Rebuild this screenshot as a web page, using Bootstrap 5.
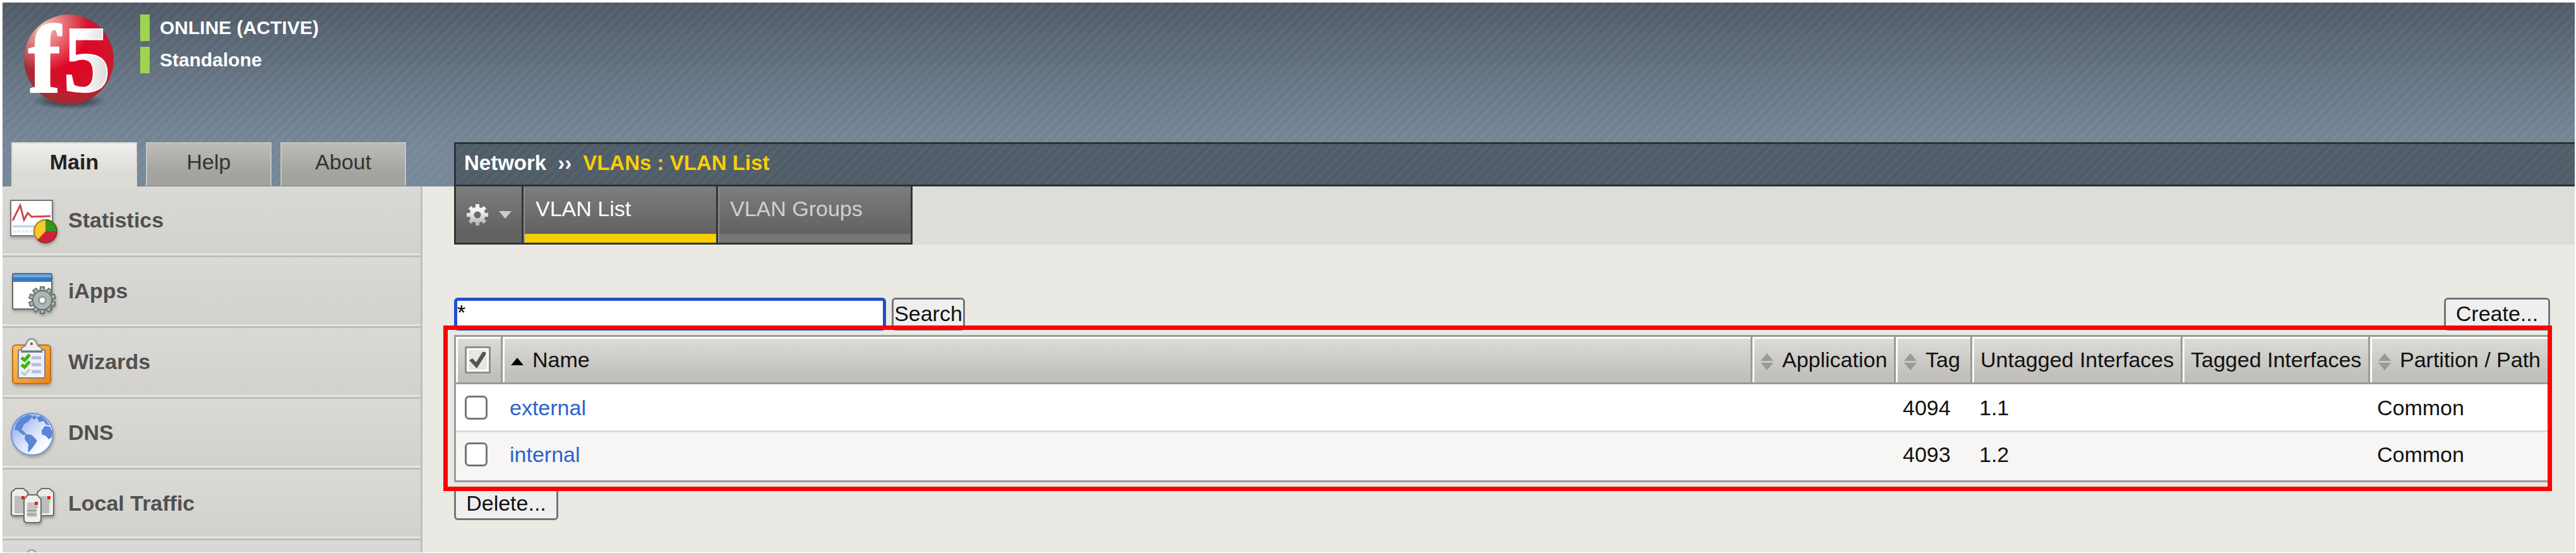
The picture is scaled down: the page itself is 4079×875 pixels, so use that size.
<!DOCTYPE html>
<html lang="en">
<head>
<meta charset="utf-8">
<meta name="viewport" content="width=device-width, initial-scale=1">
<title>VLAN List</title>
<link rel="stylesheet" href="https://cdn.jsdelivr.net/npm/bootstrap@5.3.0/dist/css/bootstrap.min.css">
<style>
  body { font-family: "Liberation Sans", Arial, sans-serif; font-size: 34px; line-height: 40px; color: #111; background: #fff; }
  .page { padding: 4px 2px 1px 4px; }
  .banner { background: repeating-linear-gradient(135deg, rgba(255,255,255,.04) 0 4px, transparent 5px 10px, rgba(255,255,255,.04) 11px), linear-gradient(#4f5a66, #6a7989 50%, #758798 80%); }
  .banner-top { height: 221px; padding-left: 24px; gap: 34px; }
  .status { font-size: 30px; line-height: 42px; font-weight: 700; color: #fff; gap: 9px; padding-top: 19px; }
  .status div { border-left: 15px solid #9fd44f; padding-left: 16px; }
  .side-tabs { width: 715px; gap: 14px; padding-left: 14px; height: 70px; flex: none; }
  .side-tabs button { width: 199px; border: 2px solid #c4c4c0; border-bottom: 2px solid #8f908c; background: linear-gradient(#bcbbb8, #a3a49f 70%); color: #333; padding: 0 0 8px; border-radius: 0; }
  .side-tabs button.active { font-weight: 700; color: #222; background: linear-gradient(#f0efed, #dcdbd6 70%); border-color: #d8d7d4 #d8d7d4 #dcdbd6; }
  .crumbs { height: 70px; border: 3px solid #2f3133; border-right: 0; padding: 0 0 4px 13px; font-size: 33px; font-weight: 700; color: #fff; background: repeating-linear-gradient(135deg, rgba(255,255,255,.03) 0 4px, transparent 5px 10px, rgba(255,255,255,.03) 11px), #505c68; }
  .crumbs a { color: #fff; text-decoration: none; }
  .crumbs .sep { padding: 0 18px; }
  .crumbs .here { color: #f8cf00; }
  .body-row { min-height: 0; }
  .side { width: 665px; flex: none; overflow: hidden; border-right: 3px solid #bebebd; }
  .side a { display: flex; align-items: center; height: 112px; gap: 10px; padding-left: 10px; border-top: 3px solid #bdbcba; border-bottom: 3px solid #e6e5e1; background: linear-gradient(#dad9d5, #d2d1cc); color: #505050; font-weight: 700; text-decoration: none; }
  .side a:first-child { height: 109px; border-top: 0; }
  .side svg { width: 84px; height: 84px; flex: none; filter: drop-shadow(1px 3px 2px rgba(0,0,0,.25)); }
  .content-pane { background: #eae9e4; padding-left: 50px; }
  .view-tabs { height: 92px; }
  .view-tabs > * { border: 0; border-right: 3px solid #333; border-bottom: 3px solid #333; background: linear-gradient(#7e7e7e, #626262 80%); box-shadow: inset 2px 0 #909090; color: #d0d0d0; padding: 0; }
  .view-tabs .gearbtn { width: 110px; border-left: 3px solid #333; box-shadow: none; }
  .view-tabs .vtab { width: 308px; text-align: left; padding: 3px 0 0 19px; text-decoration: none; border-radius: 0; }
  .view-tabs .vtab span { display: block; height: 72px; padding-top: 12px; }
  .view-tabs .vtab::after { content: ""; display: block; height: 14px; background: #767676; margin-left: -17px; }
  .view-tabs .vtab.active { color: #fff; }
  .view-tabs .vtab.active::after { background: #f6cf05; }
  .view-tabs .tab-fill { background: #deddd8; border: 0; box-shadow: none; }
  .tools { padding: 84px 39px 7px 0; gap: 9px; }
  .tools input { width: 684px; height: 52px; border: 5px solid #1d50cf; border-radius: 6px; padding: 0 0 6px; background: #fff; color: #000; outline: 0; }
  .sysbtn { height: 52px; border: 3px solid #767676; border-radius: 6px; background: #efefef; color: #111; padding: 0 0 3px; line-height: 40px; }
  .w-find { width: 116px; } .w-make { width: 168px; } .w-del { width: 165px; }
  .grid-wrap { margin-right: 39px; position: relative; }
  .callout { position: absolute; inset: -15px -3px -14px -17px; border: 7px solid #f00; pointer-events: none; }
  .vlans { width: 100%; table-layout: fixed; border: 3px solid #9a9a9a; border-collapse: separate; border-spacing: 0; }
  .vlans th { height: 75px; font-weight: 400; border-left: 3px solid #9a9a9a; border-bottom: 3px solid #9a9a9a; background: linear-gradient(#dddcd8, #c1c0bb 85%); box-shadow: inset 3px 3px #fff; padding: 0 0 0 13px; white-space: nowrap; }
  .vlans th:first-child { border-left: 0; }
  .vlans th:first-child, .vlans td:first-child { padding-left: 14px; }
  .vlans td { height: 76px; background: #fff; padding: 0 0 0 14px; border-bottom: 3px solid #dcdcdc; }
  .vlans tr:last-child td { padding-bottom: 4px; background: #f7f6f4; border-bottom-color: #f7f6f4; }
  .vlans a { color: #2a62cc; text-decoration: none; }
  .vlans input { appearance: none; display: block; width: 36px; height: 38px; margin: 0; border: 3px solid #767676; border-radius: 7px; background: #fff; }
  .vlans th input { width: 41px; height: 43px; border: 3px solid #8e8e8c; border-radius: 2px; background: #e6e6e3 url("data:image/svg+xml,%3Csvg xmlns='http://www.w3.org/2000/svg' viewBox='0 0 35 37'%3E%3Cpath d='M4 19l5-3 6 6L25 6h5L30 10 16 32z' fill='%23555'/%3E%3C/svg%3E") center / 100%; box-shadow: inset 0 0 0 3px #fff; }
  .srt { width: 20px; height: 27px; margin-right: 14px; }
  .delrow { padding-top: 8px; }
</style>
</head>
<body>
<div class="page d-flex flex-column vh-100 overflow-hidden">
  <header class="banner">
    <div class="banner-top d-flex align-items-start">
      <svg width="160" height="188" viewBox="28 4 160 188" role="img" aria-label="f5">
        <defs>
          <radialGradient id="ball" cx=".55" cy=".45" r=".62"><stop offset="0" stop-color="#e2001f"/><stop offset=".6" stop-color="#d5122b"/><stop offset="1" stop-color="#8c3838"/></radialGradient>
          <radialGradient id="shine" cx=".22" cy=".14" r=".5"><stop offset="0" stop-color="#f7c4b8"/><stop offset="1" stop-color="#f7c4b8" stop-opacity="0"/></radialGradient>
          <radialGradient id="shade"><stop offset="0" stop-color="#111" stop-opacity=".8"/><stop offset="1" stop-color="#111" stop-opacity="0"/></radialGradient>
          <linearGradient id="five" x1="0" y1="0" x2="1" y2="0"><stop offset=".4" stop-color="#fff"/><stop offset="1" stop-color="#d5d5d5"/></linearGradient>
        </defs>
        <ellipse cx="110" cy="160" rx="60" ry="13" fill="url(#shade)"/>
        <circle cx="109" cy="94" r="71" fill="url(#ball)"/>
        <circle cx="109" cy="94" r="71" fill="url(#shine)"/>
        <text x="45" y="145" font-family="Liberation Serif, serif" font-weight="700" font-size="152" fill="#fff" stroke="#fff" stroke-width="3">f</text>
        <text x="100" y="145" font-family="Liberation Serif, serif" font-weight="700" font-size="150" fill="url(#five)" stroke="#fff" stroke-width="2">5</text>
      </svg>
      <div class="status d-flex flex-column"><div>ONLINE (ACTIVE)</div><div>Standalone</div></div>
    </div>
    <div class="d-flex">
      <div class="side-tabs d-flex">
        <button type="button" class="active">Main</button><button type="button">Help</button><button type="button">About</button>
      </div>
      <nav class="crumbs flex-grow-1 d-flex align-items-center" aria-label="breadcrumb"><a href="#">Network</a><span class="sep">››</span><span class="here">VLANs : VLAN List</span></nav>
    </div>
  </header>
  <div class="body-row d-flex flex-grow-1">
    <nav class="side">
      <a href="#"><svg viewBox="0 0 84 84">
        <rect x="3" y="11" width="66" height="56" fill="#fff" stroke="#777" stroke-width="2"/>
        <path d="M6 50h58v4H6z" fill="#c3d8ea"/><path d="M6 60h50" stroke="#e4ecf4" stroke-width="4" stroke-dasharray="5 2"/>
        <path d="M6 43L18 19l6 23 6-11 6 6 30-1" fill="none" stroke="#cc4a52" stroke-width="3"/>
        <circle cx="58" cy="60" r="19" fill="#d3203a"/><path d="M58 60V41a19 19 0 0 1 19 19z" fill="#2e9a1b"/><path d="M58 60V41a19 19 0 0 0-13 33z" fill="#f7c92c"/>
        <circle cx="58" cy="60" r="18" fill="none" stroke="#5a3a20" stroke-opacity=".5" stroke-width="2"/></svg>Statistics</a>
      <a href="#"><svg viewBox="0 0 84 84">
        <rect x="6" y="15" width="62" height="56" rx="2" fill="#fff" stroke="#666" stroke-width="2"/><path d="M7 16h60v6H7z" fill="#5fa9ee"/><path d="M7 21h60v7H7z" fill="#3a78bb"/>
        <g transform="translate(53 57)"><g id="teeth" fill="#aab8b4" stroke="#66706e" stroke-width="2"><path id="tt" d="M-4-13l1-8h6l1 8v26l-1 8h-6l-1-8z"/><use href="#tt" transform="rotate(36)"/><use href="#tt" transform="rotate(72)"/><use href="#tt" transform="rotate(108)"/><use href="#tt" transform="rotate(144)"/><circle r="15"/></g><circle r="14" fill="#aab8b4"/><circle r="7" fill="#8e9b98"/><circle r="4" fill="#fff"/></g></svg>iApps</a>
      <a href="#"><svg viewBox="0 0 84 84">
        <defs><linearGradient id="board" x2="1" y2="1"><stop stop-color="#fbc566"/><stop offset="1" stop-color="#ef820d"/></linearGradient></defs>
        <rect x="6" y="16" width="60" height="61" rx="5" fill="url(#board)" stroke="#b9701d" stroke-width="2"/>
        <rect x="15" y="24" width="42" height="44" fill="#eef0ff" stroke="#80808c" stroke-width="2"/>
        <path d="M20 27v-6l6-4 3-7q7-8 14 0l3 7 6 4v6z" fill="#eee" stroke="#8b8b8b" stroke-width="2"/><path d="M20 26h32" stroke="#777" stroke-width="3"/><circle cx="36" cy="14" r="2" fill="#555"/>
        <path d="M20 36l5 4 8-9M20 47l5 4 8-9" fill="none" stroke="#3fb50f" stroke-width="5"/><path d="M20 59l5 4 8-9" fill="none" stroke="#ccc" stroke-width="4"/>
        <path d="M36 36h15M36 47h15M36 58h15" stroke="#b4bedb" stroke-width="5"/></svg>Wizards</a>
      <a href="#"><svg viewBox="0 0 84 84">
        <defs><linearGradient id="sea" x2="1" y2="1"><stop offset=".1" stop-color="#85a7ea"/><stop offset=".5" stop-color="#d6e2fa"/><stop offset=".8" stop-color="#fff"/><stop offset="1" stop-color="#a9c2f3"/></linearGradient></defs>
        <circle cx="37" cy="45" r="33" fill="url(#sea)" stroke="#6f93dc" stroke-width="2"/>
        <path d="M9 38l3-10 7-8 12-6 6 2-2 4-4 5-7 4-4 9 4 3 4 4-6 1-8-7zM26 45l10 1 9 9-5 8-6 8-4 3 1-13-6-8zM52 39l5-7 8 1 4 8-1 9-5 3-4-5-7-3zM44 18l7-2 8 7 6 8-6-1-4-6-7 2zM35 18l7-3 2 4-4 3z" fill="#5b86d6"/></svg>DNS</a>
      <a href="#"><svg viewBox="0 0 84 84">
        <g stroke="#6b6b6b" stroke-width="2" fill="#ececec"><path id="srv" d="M4 60V25l7-6h12l7 6v35l-2 2H6z"/><use href="#srv" x="41"/></g>
        <path d="M9 31h14v27H9zM50 31h14v27H50z" fill="#bdbdbd"/>
        <path d="M20 31h5v5h-5zM61 31h5v5h-5z" fill="#f0142e"/><path d="M20 37h5v4h-5zM61 37h5v4h-5z" fill="#8ee66e"/>
        <path d="M24 70V36l6-7h15l6 7v34l-3 3H27z" fill="#efefef" stroke="#6b6b6b" stroke-width="2"/>
        <path d="M29 41h15v23H29z" fill="#c4c4c4"/><path d="M29 54h15M29 60h15" stroke="#999" stroke-width="2"/><path d="M41 40h5v5h-5z" fill="#f0142e"/><path d="M41 46h5v4h-5z" fill="#8ee66e"/></svg>Local Traffic</a>
      <a href="#" aria-label="Traffic Intelligence"><svg viewBox="0 0 84 84"><circle cx="36" cy="11" r="7" fill="#e0e0de" stroke="#a0a09e" stroke-width="2"/></svg></a>
    </nav>
    <main class="content-pane flex-grow-1">
      <div class="view-tabs d-flex">
        <button type="button" class="gearbtn d-flex align-items-center justify-content-center gap-3" aria-label="Options">
          <svg width="36" height="36" viewBox="-18 -18 36 36"><defs><linearGradient id="steel" gradientUnits="userSpaceOnUse" x1="0" y1="-18" x2="0" y2="18"><stop offset=".3" stop-color="#f4f4f4"/><stop offset="1" stop-color="#adadad"/></linearGradient></defs><path d="M0-17V-8M0 17V8M-17 0h9M17 0H8M-12-12l6 6M12 12l-6-6M12-12l-6 6M-12 12l6-6" stroke="url(#steel)" stroke-width="6"/><circle r="9" fill="none" stroke="url(#steel)" stroke-width="7"/></svg>
          <svg width="20" height="12" viewBox="0 0 20 12"><path d="M0 0h20L10 12z" fill="#ccc"/></svg>
        </button>
        <a href="#" class="vtab active"><span>VLAN List</span></a>
        <a href="#" class="vtab"><span>VLAN Groups</span></a>
        <div class="tab-fill flex-grow-1"></div>
      </div>
      <form class="tools d-flex">
        <input type="text" value="*" aria-label="Search VLANs">
        <button type="button" class="sysbtn w-find">Search</button>
        <button type="button" class="sysbtn w-make ms-auto">Create...</button>
      </form>
      <div class="grid-wrap">
        <table class="vlans">
          <colgroup><col style="width:71px"><col><col style="width:227px"><col style="width:121px"><col style="width:333px"><col style="width:297px"><col style="width:285px"></colgroup>
          <thead><tr>
            <th><input type="checkbox" checked aria-label="Select all"></th>
            <th><svg class="srt" viewBox="0 0 20 27"><path d="M0 19h20L10 7z" fill="#000"/></svg>Name</th>
            <th><svg class="srt" viewBox="0 0 20 27"><path d="M0 12h20L10 0zM0 15h20L10 27z" fill="#999"/></svg>Application</th>
            <th><svg class="srt" viewBox="0 0 20 27"><path d="M0 12h20L10 0zM0 15h20L10 27z" fill="#999"/></svg>Tag</th>
            <th>Untagged Interfaces</th>
            <th>Tagged Interfaces</th>
            <th><svg class="srt" viewBox="0 0 20 27"><path d="M0 12h20L10 0zM0 15h20L10 27z" fill="#999"/></svg>Partition / Path</th>
          </tr></thead>
          <tbody>
            <tr><td><input type="checkbox" aria-label="Select external"></td><td><a href="#">external</a></td><td></td><td>4094</td><td>1.1</td><td></td><td>Common</td></tr>
            <tr><td><input type="checkbox" aria-label="Select internal"></td><td><a href="#">internal</a></td><td></td><td>4093</td><td>1.2</td><td></td><td>Common</td></tr>
          </tbody>
        </table>
        <div class="callout"></div>
      </div>
      <div class="delrow"><button type="button" class="sysbtn w-del">Delete...</button></div>
    </main>
  </div>
</div>
<script src="https://cdn.jsdelivr.net/npm/bootstrap@5.3.0/dist/js/bootstrap.bundle.min.js"></script>
</body>
</html>
